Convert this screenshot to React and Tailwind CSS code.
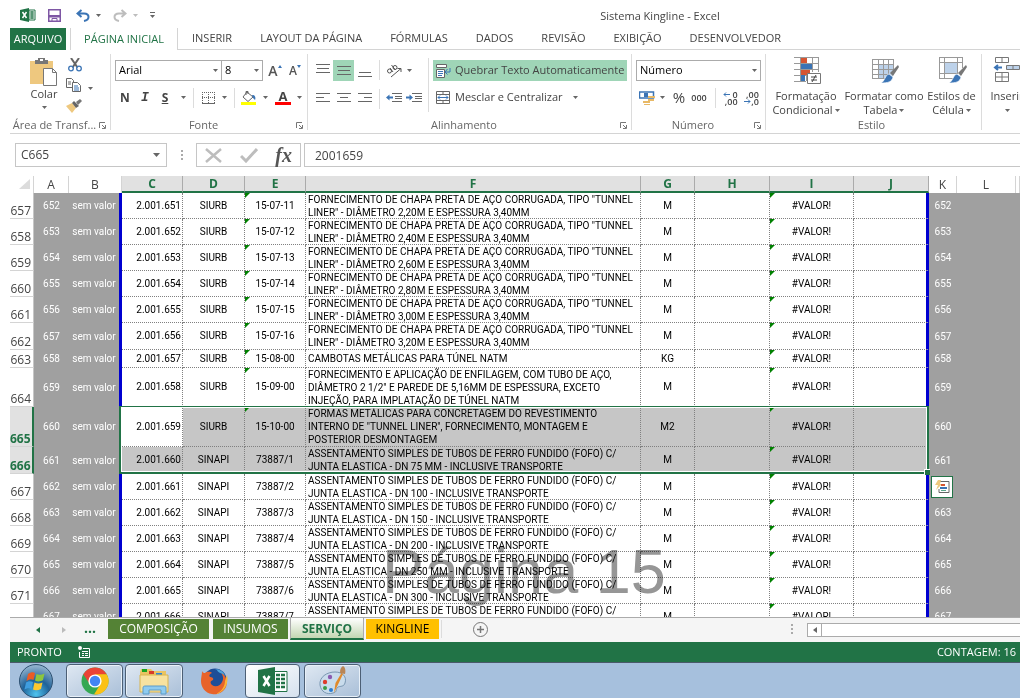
import React from 'react';

const MENU_TABS = ['INSERIR', 'LAYOUT DA PÁGINA', 'FÓRMULAS', 'DADOS', 'REVISÃO', 'EXIBIÇÃO', 'DESENVOLVEDOR'];

const COLUMNS = [
  { name: 'A', width: 'w-[35px]' },
  { name: 'B', width: 'w-[53px]' },
  { name: 'C', width: 'w-[61px]', active: true },
  { name: 'D', width: 'w-[62px]', active: true },
  { name: 'E', width: 'w-[61px]', active: true },
  { name: 'F', width: 'w-[335px]', active: true },
  { name: 'G', width: 'w-[54px]', active: true },
  { name: 'H', width: 'w-[75px]', active: true },
  { name: 'I', width: 'w-[84px]', active: true },
  { name: 'J', width: 'w-[75px]', active: true },
  { name: 'K', width: 'w-[28px]' },
  { name: 'L', width: 'w-[59px]' },
  { name: '', width: 'w-auto' },
];

const tunnel = (size) => [
  'FORNECIMENTO DE CHAPA PRETA DE AÇO CORRUGADA, TIPO "TUNNEL',
  `LINER" - DIÂMETRO ${size}M E ESPESSURA 3,40MM`,
];

const tube = (size) => [
  'ASSENTAMENTO SIMPLES DE TUBOS DE FERRO FUNDIDO (FOFO) C/',
  `JUNTA ELASTICA - DN ${size} - INCLUSIVE TRANSPORTE`,
];

const ROWS = [
  { row: 657, source: 'SIURB', code: '15-07-11', unit: 'M', text: tunnel('2,20') },
  { row: 658, source: 'SIURB', code: '15-07-12', unit: 'M', text: tunnel('2,40') },
  { row: 659, source: 'SIURB', code: '15-07-13', unit: 'M', text: tunnel('2,60') },
  { row: 660, source: 'SIURB', code: '15-07-14', unit: 'M', text: tunnel('2,80') },
  { row: 661, source: 'SIURB', code: '15-07-15', unit: 'M', text: tunnel('3,00') },
  { row: 662, source: 'SIURB', code: '15-07-16', unit: 'M', text: tunnel('3,20'), height: 'h-[27px]' },
  { row: 663, source: 'SIURB', code: '15-08-00', unit: 'KG', text: ['CAMBOTAS METÁLICAS PARA TÚNEL NATM'], height: 'h-[18px]' },
  {
    row: 664, source: 'SIURB', code: '15-09-00', unit: 'M', height: 'h-[39px]',
    text: ['FORNECIMENTO E APLICAÇÃO DE ENFILAGEM, COM TUBO DE AÇO,', 'DIÂMETRO 2 1/2" E PAREDE DE 5,16MM DE ESPESSURA, EXCETO', 'INJEÇÃO, PARA IMPLATAÇÃO DE TÚNEL NATM'],
  },
  {
    row: 665, source: 'SIURB', code: '15-10-00', unit: 'M2', height: 'h-10', selected: true, current: true,
    text: ['FORMAS METÁLICAS PARA CONCRETAGEM DO REVESTIMENTO', 'INTERNO DE "TUNNEL LINER", FORNECIMENTO, MONTAGEM E', 'POSTERIOR DESMONTAGEM'],
  },
  { row: 666, source: 'SINAPI', code: '73887/1', unit: 'M', text: tube('75 MM'), height: 'h-[27px]', selected: true },
  { row: 667, source: 'SINAPI', code: '73887/2', unit: 'M', text: tube('100') },
  { row: 668, source: 'SINAPI', code: '73887/3', unit: 'M', text: tube('150') },
  { row: 669, source: 'SINAPI', code: '73887/4', unit: 'M', text: tube('200') },
  { row: 670, source: 'SINAPI', code: '73887/5', unit: 'M', text: tube('250 MM') },
  { row: 671, source: 'SINAPI', code: '73887/6', unit: 'M', text: tube('300') },
  { row: 672, source: 'SINAPI', code: '73887/7', unit: 'M', text: tube('350') },
];

const Caret = ({ className = 'text-[#666]' }) => (
  <svg className={`shrink-0 ${className}`} width="5" height="3" viewBox="0 0 5 3" fill="currentColor">
    <path d="M0 0h5L2.5 3z" />
  </svg>
);

const Launcher = ({ label }) => (
  <button aria-label={label} className="text-[#777]">
    <svg width="7" height="7" viewBox="0 0 7 7" fill="none" stroke="currentColor">
      <path d="M0.5 6V0.500H6M3 3l3 3M6.500 3v3.500H3" />
    </svg>
  </button>
);

const Lines = ({ widths, align = 'left', top = 0 }) => (
  <svg width="14" height="14" viewBox="0 0 14 14" fill="#666">
    {widths.map((w, i) => {
      const x = align === 'left' ? 0 : align === 'right' ? 14 - w : (14 - w) / 2;
      return <rect key={i} x={x} y={top + i * 4} width={w} height="1" />;
    })}
  </svg>
);

const Divider = ({ className = 'h-full' }) => <span className={`w-px shrink-0 bg-[#dcdcdc] ${className}`} />;

const Group = ({ label, width, launcher, children }) => (
  <section className={`flex shrink-0 flex-col pt-2 ${width}`}>
    <div className="flex h-[60px]">{children}</div>
    <div className="flex h-4 items-center pr-1">
      <h2 className="flex-1 whitespace-nowrap text-center text-[#666]">{label}</h2>
      {launcher && <Launcher label={`Opções de ${label}`} />}
    </div>
  </section>
);

const IconButton = ({ label, className = 'w-5', children }) => (
  <button aria-label={label} className={`flex h-[21px] shrink-0 items-center justify-center ${className}`}>
    {children}
  </button>
);

const Combo = ({ id, label, value, className }) => (
  <div className={`relative h-[21px] shrink-0 ${className}`}>
    <label htmlFor={id} className="sr-only">{label}</label>
    <select id={id} className="block h-full w-full appearance-none border border-[#ababab] bg-white pl-[3px] text-black outline-none">
      <option>{value}</option>
    </select>
    <span className="pointer-events-none absolute inset-y-0 right-1 flex items-center"><Caret /></span>
  </div>
);

const TitleBar = () => (
  <header className="flex h-7 items-center">
    <div className="flex w-[290px] shrink-0 items-center pl-2.5 pt-0.5">
      <svg width="16" height="14" viewBox="0 0 16 14">
        <path d="M9 2h6v10H9z" fill="#fff" stroke="#217346" />
        <path d="M10 4h4M10 6h4M10 8h4M10 10h4M12 3v8" stroke="#217346" />
        <path d="M0 2l9-2v14l-9-2z" fill="#217346" />
        <path d="M2.500 4l4 6M6.500 4l-4 6" stroke="#fff" strokeWidth="1.500" />
      </svg>
      <button aria-label="Salvar" className="ml-3">
        <svg width="13" height="13" viewBox="0 0 13 13">
          <path d="M0.750 0.750h11.500v11.500H0.750z" fill="#fff" stroke="#7e57a4" strokeWidth="1.500" />
          <path d="M0.500 6h12v2.500h-12z" fill="#7e57a4" />
          <path d="M4 12V9.500h5V12" fill="none" stroke="#7e57a4" />
        </svg>
      </button>
      <button aria-label="Desfazer" className="ml-[15px] flex items-center gap-1.5">
        <svg width="14" height="13" viewBox="0 0 14 13" fill="none" stroke="#3b74b5" strokeWidth="2">
          <path d="M5.500 1L1.500 4.500l4 3.500M2 4.500h6c3 0 4.500 1.500 4.500 3.500S11 11.500 8 12" />
        </svg>
        <Caret />
      </button>
      <button aria-label="Refazer" className="ml-3 flex items-center gap-1.5 text-[#bdbdbd]">
        <svg width="14" height="13" viewBox="0 0 14 13" fill="none" stroke="currentColor" strokeWidth="2">
          <path d="M8.500 1l4 3.500-4 3.500M12 4.500H6C3 4.500 1.500 6 1.500 8S3 11.500 6 12" />
        </svg>
        <Caret className="text-[#bdbdbd]" />
      </button>
      <button aria-label="Personalizar barra" className="ml-3 flex flex-col items-center gap-0.5">
        <span className="h-px w-[5px] bg-[#666]" />
        <Caret />
      </button>
    </div>
    <h1 className="flex-1 pt-1 text-center">Sistema Kingline - Excel</h1>
  </header>
);

const MenuTabs = () => (
  <nav className="flex h-[22px] items-stretch whitespace-nowrap">
    <button className="w-14 shrink-0 bg-[#217346] text-white">ARQUIVO</button>
    <button className="ml-1 w-[108px] shrink-0 border-x border-[#d4d4d4] text-[#217346]">PÁGINA INICIAL</button>
    <div className="flex flex-1 border-b border-[#d4d4d4]">
      {MENU_TABS.map((tab) => (
        <button key={tab} className="px-3.5">{tab}</button>
      ))}
    </div>
  </nav>
);

const ClipboardGroup = () => (
  <Group label="Área de Transf..." width="w-[100px]" launcher>
    <button className="ml-3 flex w-11 flex-col items-center">
      <svg width="28" height="28" viewBox="0 0 28 28">
        <path d="M0 3h23v23H0z" fill="#eec87f" />
        <path d="M5 2h3V0h7v2h3v4H5z" fill="#777" />
        <path d="M10 1h3v2h-3z" fill="#fff" />
        <path d="M13.500 10.500h9l4 4v13h-13z" fill="#fff" stroke="#777" />
        <path d="M22.500 10.500v4h4" fill="none" stroke="#777" />
      </svg>
      <span className="leading-4">Colar</span>
      <span className="mt-1"><Caret /></span>
    </button>
    <div className="flex flex-col">
      <button aria-label="Recortar" className="flex h-5 w-8 items-start pl-0.5">
        <svg width="14" height="14" viewBox="0 0 14 14" fill="none">
          <path d="M3 0l6.500 9.500M11 0L4.500 9.500" stroke="#666" strokeWidth="2" />
          <circle cx="3" cy="10.500" r="2.300" stroke="#3b74b5" strokeWidth="1.300" />
          <circle cx="11" cy="10.500" r="2.300" stroke="#3b74b5" strokeWidth="1.300" />
        </svg>
      </button>
      <button aria-label="Copiar" className="flex h-5 w-8 items-start gap-1.5">
        <svg width="16" height="16" viewBox="0 0 16 16" fill="#fff" stroke="#666">
          <path d="M0.500 0.500h5l2 2v7h-7zM2 4h3M2 6h3" />
          <path d="M6.500 4.500h5l3 3v6h-8z" />
          <path d="M8 8h4M8 10h5M8 12h5" stroke="#3b74b5" />
        </svg>
        <span className="self-center"><Caret /></span>
      </button>
      <button aria-label="Pincel de formatação" className="flex h-[15px] w-8 items-end">
        <svg width="16" height="14" viewBox="0 0 16 14">
          <path d="M0 7l6-3 4 5-4 5z" fill="#eec87f" />
          <path d="M6 4l2-2 5 5-3 2z" fill="#666" />
          <path d="M10 3l4-3 2 2-4 4z" fill="#777" />
        </svg>
      </button>
    </div>
  </Group>
);

const FontGroup = () => (
  <Group label="Fonte" width="w-[196px]" launcher>
    <div className="flex flex-col gap-1.5 pl-1 pt-0.5">
      <div className="flex">
        <Combo id="font" label="Fonte" value="Arial" className="w-[107px]" />
        <Combo id="font-size" label="Tamanho da fonte" value="8" className="-ml-px w-[42px]" />
        <IconButton label="Aumentar fonte" className="ml-0.5 w-5">
          <span className="text-sm font-semibold text-[#555]">A</span>
          <svg className="mb-2" width="4" height="3" viewBox="0 0 4 3" fill="#3b74b5"><path d="M2 0l2 3H0z" /></svg>
        </IconButton>
        <IconButton label="Diminuir fonte">
          <span className="text-xs font-semibold text-[#555]">A</span>
          <svg className="mb-2" width="4" height="3" viewBox="0 0 4 3" fill="#3b74b5"><path d="M0 0h4L2 3z" /></svg>
        </IconButton>
      </div>
      <div className="flex items-center text-xs text-[#444]">
        <IconButton label="Negrito"><b>N</b></IconButton>
        <IconButton label="Itálico"><b className="font-['Liberation_Mono',monospace] text-[13px] italic">I</b></IconButton>
        <IconButton label="Sublinhado"><b className="underline">S</b></IconButton>
        <IconButton label="Mais sublinhados" className="w-4"><Caret /></IconButton>
        <Divider className="mx-0.5 h-5" />
        <IconButton label="Bordas" className="w-6">
          <svg width="13" height="12" viewBox="0 0 13 12" fill="none" stroke="#666">
            <path d="M0.500 0v11M12.500 0v11M6.500 0v11M0 0.500h13M0 5.500h13" strokeDasharray="1 1" />
            <path d="M0 11.500h13" />
          </svg>
        </IconButton>
        <IconButton label="Mais bordas" className="w-2"><Caret /></IconButton>
        <Divider className="ml-1.5 mr-1 h-5" />
        <IconButton label="Cor de preenchimento">
          <svg width="16" height="14" viewBox="0 0 16 14">
            <path d="M6 1l6 5-5 4.500L2 6z" fill="#fff" stroke="#666" />
            <path d="M5 4V0.500h2V3" fill="none" stroke="#666" />
            <path d="M11 4c3 0 4 2 3 5l-2-2z" fill="#3b74b5" />
            <path d="M0 11h15v3H0z" fill="#ff0" />
          </svg>
        </IconButton>
        <IconButton label="Mais cores de preenchimento" className="w-3"><Caret /></IconButton>
        <IconButton label="Cor da fonte" className="w-6">
          <span className="flex w-4 flex-col items-center border-b-[3px] border-[red] text-[13px] leading-[11px]"><b>A</b></span>
        </IconButton>
        <IconButton label="Mais cores da fonte" className="w-2"><Caret /></IconButton>
      </div>
    </div>
  </Group>
);

const Indent = ({ flip }) => (
  <svg width="16" height="9" viewBox="0 0 16 9">
    <path d="M6 0.500h10M9 3.500h7M9 5.500h7M6 8.500h10" stroke="#666" />
    <path d={flip ? 'M7 4.500L3.500 1.500v2H0v2h3.500v2z' : 'M0 4.500l3.500-3v2H7v2H3.500v2z'} fill="#3b74b5" />
  </svg>
);

const AlignmentGroup = () => (
  <Group label="Alinhamento" width="w-[323px]" launcher>
    <div className="flex flex-col gap-1.5 pl-1 pt-0.5">
      <div className="flex">
        <IconButton label="Alinhar em cima" className="w-[21px]"><Lines widths={[14, 12, 14]} align="center" /></IconButton>
        <IconButton label="Alinhar no meio" className="w-[21px] bg-[#9fd5b7]"><Lines widths={[14, 12, 14]} align="center" top={2} /></IconButton>
        <IconButton label="Alinhar embaixo" className="w-[21px]"><Lines widths={[12, 14]} align="center" top={8} /></IconButton>
      </div>
      <div className="flex">
        <IconButton label="Alinhar à esquerda" className="w-[21px]"><Lines widths={[14, 8, 14]} top={2} /></IconButton>
        <IconButton label="Centralizar" className="w-[21px]"><Lines widths={[14, 8, 14]} align="center" top={2} /></IconButton>
        <IconButton label="Alinhar à direita" className="w-[21px]"><Lines widths={[14, 8, 14]} align="right" top={2} /></IconButton>
      </div>
    </div>
    <div className="flex flex-col justify-between py-0.5 pl-1"><Divider className="h-5" /><Divider className="mb-1.5 h-5" /></div>
    <div className="flex flex-col gap-1.5 pl-1.5 pt-0.5">
      <IconButton label="Orientação" className="w-[26px] gap-1">
        <svg width="17" height="14" viewBox="0 0 17 14" fill="none" stroke="#555">
          <circle cx="3.500" cy="7" r="2" />
          <path d="M4 4l3 4M5.500 1l4 5" />
          <circle cx="9" cy="3.500" r="2" />
          <path d="M5 13L15 4.500M11.500 4.500H15V8" />
        </svg>
        <Caret />
      </IconButton>
      <div className="flex gap-1">
        <button aria-label="Diminuir recuo" className="flex h-[21px] items-center"><Indent /></button>
        <button aria-label="Aumentar recuo" className="flex h-[21px] items-center"><Indent flip /></button>
      </div>
    </div>
    <Divider className="ml-1.5 h-[54px]" />
    <div className="flex flex-1 flex-col gap-1.5 px-1 pt-0.5">
      <button className="flex h-[21px] items-center gap-1 whitespace-nowrap bg-[#9fd5b7] pl-[3px]">
        <svg className="shrink-0" width="15" height="14" viewBox="0 0 15 14" fill="#fff" stroke="#666">
          <path d="M0.500 0.500h10v3H0.500zM0.500 5.500h8v8h-8z" />
          <path d="M2 7.500h5M2 9.500h5M2 11.500h4M14 4v4H9M11.500 5L9 8l2.500 2.500" fill="none" stroke="#3b74b5" />
        </svg>
        Quebrar Texto Automaticamente
      </button>
      <button className="flex h-[21px] items-center gap-1 whitespace-nowrap pl-[3px]">
        <svg className="shrink-0" width="15" height="13" viewBox="0 0 15 13" fill="#fff" stroke="#666">
          <path d="M0.500 0.500h13v12h-13zM0.500 3.500h13M0.500 9.500h13M7 0v3M7 10v3" />
          <path d="M2 6.500h10M4 4.500l-2 2 2 2M10 4.500l2 2-2 2" fill="none" stroke="#3b74b5" />
        </svg>
        Mesclar e Centralizar
        <span className="ml-1.5"><Caret /></span>
      </button>
    </div>
  </Group>
);

const NumberGroup = () => (
  <Group label="Número" width="w-[133px]" launcher>
    <div className="flex flex-1 flex-col gap-1.5 px-1 pt-0.5">
      <Combo id="number-format" label="Formato de número" value="Número" className="w-[125px]" />
      <div className="flex items-center">
        <IconButton label="Formato de moeda" className="ml-[3px] w-4">
          <svg width="16" height="14" viewBox="0 0 16 14">
            <path d="M0.500 1h14v6h-14z" fill="#fff" stroke="#3b74b5" strokeWidth="1.500" />
            <path d="M5 2h4v4H5z" fill="#3b74b5" />
            <path d="M9 5h7v2H9zM9 8h6v2H9zM4 10h7v2H4zM5 13h6v1H5z" fill="#e8b967" />
          </svg>
        </IconButton>
        <IconButton label="Mais moedas" className="w-3.5"><Caret /></IconButton>
        <IconButton label="Porcentagem" className="w-5"><span className="text-[15px]">%</span></IconButton>
        <IconButton label="Separador de milhares" className="w-5"><span className="text-[9px] font-semibold">000</span></IconButton>
        <Divider className="ml-1.5 mr-1 h-5" />
        <IconButton label="Aumentar casas decimais" className="w-[21px]">
          <span className="flex flex-col items-end text-[9px] font-semibold leading-[7px]">
            <span className="flex items-center gap-0.5">
              <svg width="7" height="5" viewBox="0 0 7 5" fill="none" stroke="#3b74b5"><path d="M7 2.500H1M3 0.500l-2 2 2 2" /></svg>
              0
            </span>
            <span>,00</span>
          </span>
        </IconButton>
        <IconButton label="Diminuir casas decimais" className="w-[21px]">
          <span className="flex flex-col items-end text-[9px] font-semibold leading-[7px]">
            <span>,00</span>
            <span className="flex items-center">
              <svg width="7" height="5" viewBox="0 0 7 5" fill="none" stroke="#3b74b5"><path d="M0 2.500h6M4 0.500l2 2-2 2" /></svg>
              ,0
            </span>
          </span>
        </IconButton>
      </div>
    </div>
  </Group>
);

const Brush = () => (
  <>
    <path d="M30 9l-8 8 3 3 6-9z" fill="#777" />
    <path d="M21 18l4 3c-1 5-5 6-12 6 4-2 4-8 8-9z" fill="#3b74b5" stroke="#fff" strokeWidth="0.700" />
  </>
);

const BigButton = ({ lines, width, children }) => (
  <button className={`flex shrink-0 flex-col items-center whitespace-nowrap leading-[14px] ${width}`}>
    <svg className="-mt-1 mb-1 h-[29px] w-8 shrink-0" viewBox="0 0 32 29">{children}</svg>
    <span>{lines[0]}</span>
    <span className="flex h-3.5 items-center gap-0.5">{lines[1]}<Caret /></span>
  </button>
);

const StyleGroup = () => (
  <Group label="Estilo" width="w-[215px]">
    <div className="flex flex-1 pt-0.5">
      <BigButton lines={['Formatação', 'Condicional']} width="w-20">
        <path d="M4 1.500h25M4 7.500h25M4 13.500h25M4 19.500h12M4 25.500h12M10.500 1v24M16.500 1v24M22.500 1v15M28.500 1v15" stroke="#999" fill="none" />
        <path d="M11 2h6v5h-6zM11 14h9v5h-9z" fill="#d65532" />
        <path d="M11 8h11v5H11zM11 19h4v6h-4z" fill="#3b74b5" />
        <path d="M17.500 17.500h13v10h-13z" fill="#fff" stroke="#777" />
        <path d="M21 21h6M21 24h6M26 19l-4 7" stroke="#444" />
      </BigButton>
      <BigButton lines={['Formatar como', 'Tabela']} width="w-[76px]">
        <path d="M10 8h15v14H10z" fill="#bdd2ea" />
        <path d="M4 3.500h22M4 8.500h22M4 13.500h22M4 18.500h18M4 22.500h15M4.500 3v20M10.500 3v20M15.500 3v20M20.500 3v20M25.500 3v10" stroke="#999" fill="none" />
        <Brush />
      </BigButton>
      <BigButton lines={['Estilos de', 'Célula']} width="w-[59px]">
        <path d="M9 7h13v10H9z" fill="#bdd2ea" />
        <path d="M3 1.500h24M3 6.500h24M3 17.500h19M3 22.500h14M3.500 1v21M8.500 1v21M21.500 1v16M26.500 1v11" stroke="#999" fill="none" />
        <Brush />
      </BigButton>
    </div>
  </Group>
);

const Ribbon = () => (
  <div className="flex h-[84px] overflow-hidden border-b border-[#d4d4d4]">
    <ClipboardGroup />
    <Divider className="mt-1 h-[76px]" />
    <FontGroup />
    <Divider className="mt-1 h-[76px]" />
    <AlignmentGroup />
    <Divider className="mt-1 h-[76px]" />
    <NumberGroup />
    <Divider className="mt-1 h-[76px]" />
    <StyleGroup />
    <Divider className="mt-1 h-[76px]" />
    <Group label="" width="w-[50px]">
      <div className="pt-0.5">
        <BigButton lines={['Inserir', '']} width="w-[50px]">
          <path d="M4.500 1.500h13v5h-13zM11 1v5M4.500 16.500h13v9h-13zM4.500 21h13M11 16v10" fill="#fff" stroke="#777" />
          <path d="M15.500 9.500h13v4h-13zM22 9v5" fill="#bdd2ea" stroke="#777" />
          <path d="M4 11.500h7M7 9l-3 2.500L7 14" stroke="#3b74b5" strokeWidth="2" fill="none" />
        </BigButton>
      </div>
    </Group>
  </div>
);

const Dots = () => (
  <span className="flex flex-col gap-0.5">
    <i className="size-0.5 bg-[#aaa]" />
    <i className="size-0.5 bg-[#aaa]" />
    <i className="size-0.5 bg-[#aaa]" />
  </span>
);

const FormulaBar = () => (
  <div className="flex h-[42px] items-center pl-[5px]">
    <div className="flex h-6 w-[152px] shrink-0 items-center border border-[#c6c6c6] pr-1.5">
      <input aria-label="Caixa de nome" defaultValue="C665" className="min-w-0 flex-1 pl-[5px] text-xs outline-none" />
      <button aria-label="Abrir lista de nomes">
        <svg width="7" height="4" viewBox="0 0 7 4" fill="#666"><path d="M0 0h7L3.500 4z" /></svg>
      </button>
    </div>
    <div className="flex w-[29px] shrink-0 justify-center"><Dots /></div>
    <div className="flex h-6 w-[105px] shrink-0 items-center justify-between border border-[#c6c6c6] px-2">
      <button aria-label="Cancelar">
        <svg width="18" height="15" viewBox="0 0 18 15" fill="none" stroke="#bdbdbd" strokeWidth="2.500"><path d="M1 1l15 13M16 1L1 14" /></svg>
      </button>
      <button aria-label="Inserir">
        <svg width="18" height="15" viewBox="0 0 18 15" fill="none" stroke="#bdbdbd" strokeWidth="3"><path d="M1 8l5 5L17 1" /></svg>
      </button>
      <button aria-label="Inserir função" className="font-['Liberation_Serif',serif] text-xl font-bold italic leading-5 text-[#555]">fx</button>
    </div>
    <input aria-label="Barra de fórmulas" defaultValue="2001659" className="ml-[3px] h-6 min-w-0 flex-1 border border-r-0 border-[#c6c6c6] pl-2.5 text-xs outline-none" />
  </div>
);

const ErrorMark = () => (
  <svg className="absolute left-0 top-0" width="5" height="5" viewBox="0 0 5 5" fill="#008000"><path d="M0 0h5L0 5z" /></svg>
);

const SheetRow = ({ item }) => {
  const { row, source, code, unit, text, selected, current, height = 'h-[26px]' } = item;
  const cell = 'relative border-b border-r border-dotted border-[#808080] p-0';
  const fill = selected ? 'bg-[#c6c6c6]' : '';
  const id = row - 5;

  return (
    <tr className={height}>
      <th scope="row" className={`border-b border-r border-b-[#d4d4d4] p-0 pr-0.5 text-right align-bottom font-['Open_Sans',sans-serif] text-xs leading-[14px] ${selected ? 'border-r-2 border-r-[#217346] bg-[#e1e1e1] font-bold text-[#217346]' : 'border-r-[#c6c6c6] font-normal text-[#444]'}`}>{row}</th>
      <td className="bg-[#a0a0a0] p-0 text-center text-white">{id}</td>
      <td className="border-r-[3px] border-[#0000d0] bg-[#a0a0a0] p-0 text-center text-white">sem valor</td>
      <td className={`${cell} pr-px text-right ${current ? 'bg-white' : fill}`}>
        2.001.{row - 6}
        {current && (
          <div className="pointer-events-none absolute -left-[3px] -top-px z-10 h-[68px] w-[810px] border-2 border-t border-[#217346] ring-1 ring-inset ring-white">
            <span className="absolute -bottom-[3px] -right-[3px] size-[6px] border-l border-t border-white bg-[#217346]" />
          </div>
        )}
      </td>
      <td className={`${cell} ${fill} text-center`}>{source}</td>
      <td className={`${cell} ${fill} text-center`}>{source === 'SIURB' && <ErrorMark />}{code}</td>
      <td className={`${cell} ${fill} whitespace-nowrap pl-0.5 leading-[13px]`}>
        <div className="-my-px">
          {text.map((line) => <div key={line}>{line}</div>)}
        </div>
      </td>
      <td className={`${cell} ${fill} text-center`}>{unit}</td>
      <td className={`${cell} ${fill}`} />
      <td className={`${cell} ${fill} text-center`}><ErrorMark />#VALOR!</td>
      <td className={`border-b border-r-[3px] border-b-[#808080] border-r-[#0000d0] p-0 [border-bottom-style:dotted] ${fill}`} />
      <td className="relative bg-[#a0a0a0] p-0 text-center text-white">
        {id}
        {row === 667 && (
          <button aria-label="Análise rápida" className="absolute left-0.5 top-0.5 z-10 flex size-[22px] items-center justify-center border border-[#217346] bg-white">
            <svg width="15" height="14" viewBox="0 0 15 14">
              <path d="M5 1.500h9v11H4V9" fill="#fff" stroke="#666" />
              <path d="M3 0h3L5 4h2L1 10l2-5H0z" fill="#eec87f" />
              <path d="M6 4h4v2H6z" fill="#d65532" />
              <path d="M5 7h7v2H5z" fill="#3b74b5" />
              <path d="M6 10h5v1H6z" fill="#5aa58a" />
            </svg>
          </button>
        )}
      </td>
      <td className="bg-[#a0a0a0] p-0" />
      <td className="bg-[#a0a0a0] p-0" />
    </tr>
  );
};

const Sheet = () => (
  <main className="relative min-h-0 flex-1 overflow-hidden">
    <table className="w-full table-fixed border-separate border-spacing-0 font-[Roboto,sans-serif] text-[10px] leading-3 text-black">
      <thead>
        <tr className="h-[17px] font-['Open_Sans',sans-serif] text-xs leading-[14px]">
          <th className="w-6 border-r border-[#d4d4d4] p-0">
            <svg className="ml-auto mr-0.5" width="12" height="11" viewBox="0 0 12 11" fill="#dcdcdc"><path d="M11 0v10H0z" /></svg>
          </th>
          {COLUMNS.map(({ name, width, active }) => (
            <th key={name} scope="col" className={`p-0 ${width} ${active ? 'border-b-2 border-r border-b-[#217346] border-r-[#ababab] bg-[#e1e1e1] font-bold text-[#217346]' : 'border-r border-[#d4d4d4] font-normal text-[#444]'}`}>
              {name}
            </th>
          ))}
        </tr>
      </thead>
      <tbody>
        {ROWS.map((item) => <SheetRow key={item.row} item={item} />)}
      </tbody>
    </table>
    <div className="pointer-events-none absolute left-[372px] top-[360px] whitespace-nowrap font-['Liberation_Sans',sans-serif] text-[63px] leading-[70px] text-[#969696] mix-blend-multiply">Página 15</div>
  </main>
);

const SheetTabs = () => (
  <div className="flex h-[25px] shrink-0 items-start overflow-hidden border-t border-[#ababab] bg-[#f5f5f5] text-xs">
    <div className="flex h-6 w-24 shrink-0 items-center pl-[26px]">
      <button aria-label="Planilha anterior" className="mr-[22px]">
        <svg width="4" height="6" viewBox="0 0 4 6" fill="#217346"><path d="M4 0v6L0 3z" /></svg>
      </button>
      <button aria-label="Próxima planilha" className="mr-[18px]">
        <svg width="4" height="6" viewBox="0 0 4 6" fill="#bbb"><path d="M0 0v6l4-3z" /></svg>
      </button>
      <button aria-label="Mais planilhas" className="pb-1 text-sm font-bold leading-4 text-[#217346]">...</button>
    </div>
    <button className="ml-0.5 mt-px h-5 w-[101px] shrink-0 bg-[#548235] text-white">COMPOSIÇÃO</button>
    <button className="ml-1 mt-px h-5 w-[75px] shrink-0 bg-[#548235] text-white">INSUMOS</button>
    <button className="ml-0.5 h-[22px] w-[74px] shrink-0 border-x border-b-2 border-x-[#ababab] border-b-[#217346] bg-linear-to-b from-white to-[#c3d6b2] pt-0.5 font-bold text-[#217346]">SERVIÇO</button>
    <button className="ml-0.5 mt-px h-5 w-[73px] shrink-0 bg-[#ffc000] text-black">KINGLINE</button>
    <Divider className="ml-0.5 mt-0.5 h-[18px] bg-[#ababab]" />
    <button aria-label="Nova planilha" className="ml-[31px] mt-1">
      <svg width="15" height="15" viewBox="0 0 15 15" fill="none" stroke="#777">
        <circle cx="7.500" cy="7.500" r="7" />
        <path d="M4 7.500h7M7.500 4v7" strokeWidth="1.500" />
      </svg>
    </button>
    <div className="ml-auto mt-1.5 mr-3.5"><Dots /></div>
    <div className="mt-[5px] flex h-3.5 w-[213px] shrink-0 border border-r-0 border-[#ababab] bg-white">
      <button aria-label="Rolar para a esquerda" className="flex w-3.5 items-center justify-center border-r border-[#ababab]">
        <svg width="4" height="6" viewBox="0 0 4 6" fill="#666"><path d="M4 0v6L0 3z" /></svg>
      </button>
    </div>
  </div>
);

const StatusBar = () => (
  <div className="flex h-5 shrink-0 items-center bg-[#217346] pl-[7px] pr-1 text-white">
    <span>PRONTO</span>
    <svg className="ml-4" width="12" height="12" viewBox="0 0 12 12" fill="none" stroke="#fff">
      <path d="M5 2.500h6.500v9h-10V6M4 5.500h6M4 7.500h2M7 7.500h3M4 9.500h2M7 9.500h3" />
      <circle cx="2" cy="2" r="2" fill="#fff" stroke="none" />
    </svg>
    <span className="ml-auto">CONTAGEM: 16</span>
  </div>
);

const TaskButton = ({ label, className, children }) => (
  <button aria-label={label} className={`flex h-full shrink-0 items-center justify-center ${className}`}>
    {children}
  </button>
);

const FRAME = 'rounded-sm border border-[#4c5f75] bg-linear-to-br from-[#dfe8f2] to-[#a9bfd8] shadow-[inset_0_0_0_1px_#e8f0f8]';

const Taskbar = () => (
  <footer className="flex h-9 shrink-0 border-t border-[#4a5a6a] bg-[#a6c0dd] pt-px">
    <TaskButton label="Iniciar" className="ml-1.5 w-10">
      <svg width="36" height="34" viewBox="0 0 36 34">
        <defs>
          <radialGradient id="orb" cx="50%" cy="90%" r="85%">
            <stop offset="0" stopColor="#4fc3ee" />
            <stop offset="0.500" stopColor="#1f6299" />
            <stop offset="1" stopColor="#8fb0cc" />
          </radialGradient>
        </defs>
        <circle cx="18" cy="17" r="16.500" fill="url(#orb)" stroke="#2d5071" />
        <path d="M10 10c3-2 5-2 7-1l-1.500 7c-2-1-4-1-7 1z" fill="#ea5b25" />
        <path d="M18.500 10c2 1 5 1 8-0.500L25 16c-3 2-6 1.500-8 0.500z" fill="#8cc63f" />
        <path d="M8 18.500c3-2 5-1.500 7-0.500l-1.500 7c-2-1-4-1-7 0.500z" fill="#3f9ddf" />
        <path d="M16.500 18.500c2 1 5 1.500 8 0l-1.500 6.500c-3 1.500-6 1.500-8 0.500z" fill="#fdc82f" />
      </svg>
    </TaskButton>
    <TaskButton label="Chrome" className={`ml-2.5 w-[57px] ${FRAME}`}>
      <svg width="28" height="28" viewBox="0 0 28 28">
        <circle cx="14" cy="14" r="13.500" fill="#34a853" />
        <path d="M2.300 7.200A13.500 13.500 0 0 1 25.700 7.200L14 8.500 8.800 17z" fill="#ea4335" />
        <path d="M25.700 7.200A13.500 13.500 0 0 1 13 27.500l6.500-10.500L14 7.200z" fill="#fbc116" />
        <circle cx="14" cy="14" r="6.600" fill="#fff" />
        <circle cx="14" cy="14" r="5.200" fill="#4285f4" />
      </svg>
    </TaskButton>
    <TaskButton label="Explorador de arquivos" className={`ml-0.5 w-[58px] ${FRAME}`}>
      <svg width="32" height="28" viewBox="0 0 32 28">
        <path d="M2 5l1-3h10l2 2h13v21H2z" fill="#e9c463" />
        <path d="M4 2h5v3H4z" fill="#1aa321" />
        <path d="M11 4h5v3h-5z" fill="#d83b2a" />
        <path d="M18 6h6v3h-6z" fill="#2b86d9" />
        <path d="M2 8h28v17H2z" fill="#f7e2a0" stroke="#d9b44f" />
        <path d="M5 27v-6c0-2 1-2 3-2h17c2 0 3 0 3 2v6h-5v-4H11v4z" fill="#8ecbf0" stroke="#5d9cc9" />
      </svg>
    </TaskButton>
    <TaskButton label="Firefox" className="w-[62px]">
      <svg width="30" height="28" viewBox="0 0 30 28">
        <circle cx="16" cy="13" r="11.500" fill="#1d4e97" />
        <path d="M16 2c5 0 9 3 10 7-3-3-7-3-8-6z" fill="#4ba3dc" />
        <path d="M3 4c1 2 2 2 3 2 3-2 6-1 7 0-3 1-3 3-2 4 2 0 4 1 3 3-3 1-3 3-1 5 4 3 9 0 10-3 2-3 1-7-1-9 6 3 7 9 5 14-3 6-9 8-14 7C6 26 2 20 2 14 2 10 3 8 3 4z" fill="#e8632a" />
        <path d="M28 8c2 8-2 17-11 19 6-3 9-8 9-13z" fill="#fbb535" />
      </svg>
    </TaskButton>
    <TaskButton label="Excel" className="w-[55px] rounded-sm border border-[#4c5f75] bg-linear-to-br from-white to-[#d5e1ee]">
      <svg width="30" height="28" viewBox="0 0 30 28">
        <path d="M15 4.500h14v20H15z" fill="#fff" stroke="#217346" />
        <path d="M18 8h4M18 12h4M18 16h4M18 20h4M23 8h4M23 12h4M23 16h4M23 20h4" stroke="#217346" strokeWidth="2.500" />
        <path d="M0 3l17-3v28L0 25z" fill="#217346" />
        <path d="M5.500 9l6 10M11.500 9l-6 10" stroke="#fff" strokeWidth="2.500" />
      </svg>
    </TaskButton>
    <TaskButton label="Paint" className={`ml-1 w-[57px] ${FRAME}`}>
      <svg width="30" height="30" viewBox="0 0 30 30">
        <path d="M2 19C1 11 9 6 17 6c8 0 12 5 10 11-1 4-5 3-7 4-3 2 0 5-5 6C9 29 3 26 2 19z" fill="#c9dcec" stroke="#7996b1" />
        <circle cx="7" cy="16" r="2.200" fill="#de3c2c" />
        <circle cx="12" cy="11" r="2.200" fill="#8a5bb0" />
        <circle cx="7" cy="22" r="2" fill="#3a9b46" />
        <circle cx="13" cy="24" r="2" fill="#2b7bd0" />
        <path d="M25 8L16 27l1.500-10 6-10z" fill="#e08a2b" />
        <path d="M22 7c0-4 1-6 3-7 2 1 3 4 2 8z" fill="#b98555" />
      </svg>
    </TaskButton>
  </footer>
);

const App = () => (
  <div className="flex h-screen flex-col overflow-hidden bg-white pl-2.5 font-['Open_Sans',sans-serif] text-[11px] text-[#444]">
    <TitleBar />
    <MenuTabs />
    <Ribbon />
    <FormulaBar />
    <Sheet />
    <SheetTabs />
    <StatusBar />
    <Taskbar />
  </div>
);

export default App;
